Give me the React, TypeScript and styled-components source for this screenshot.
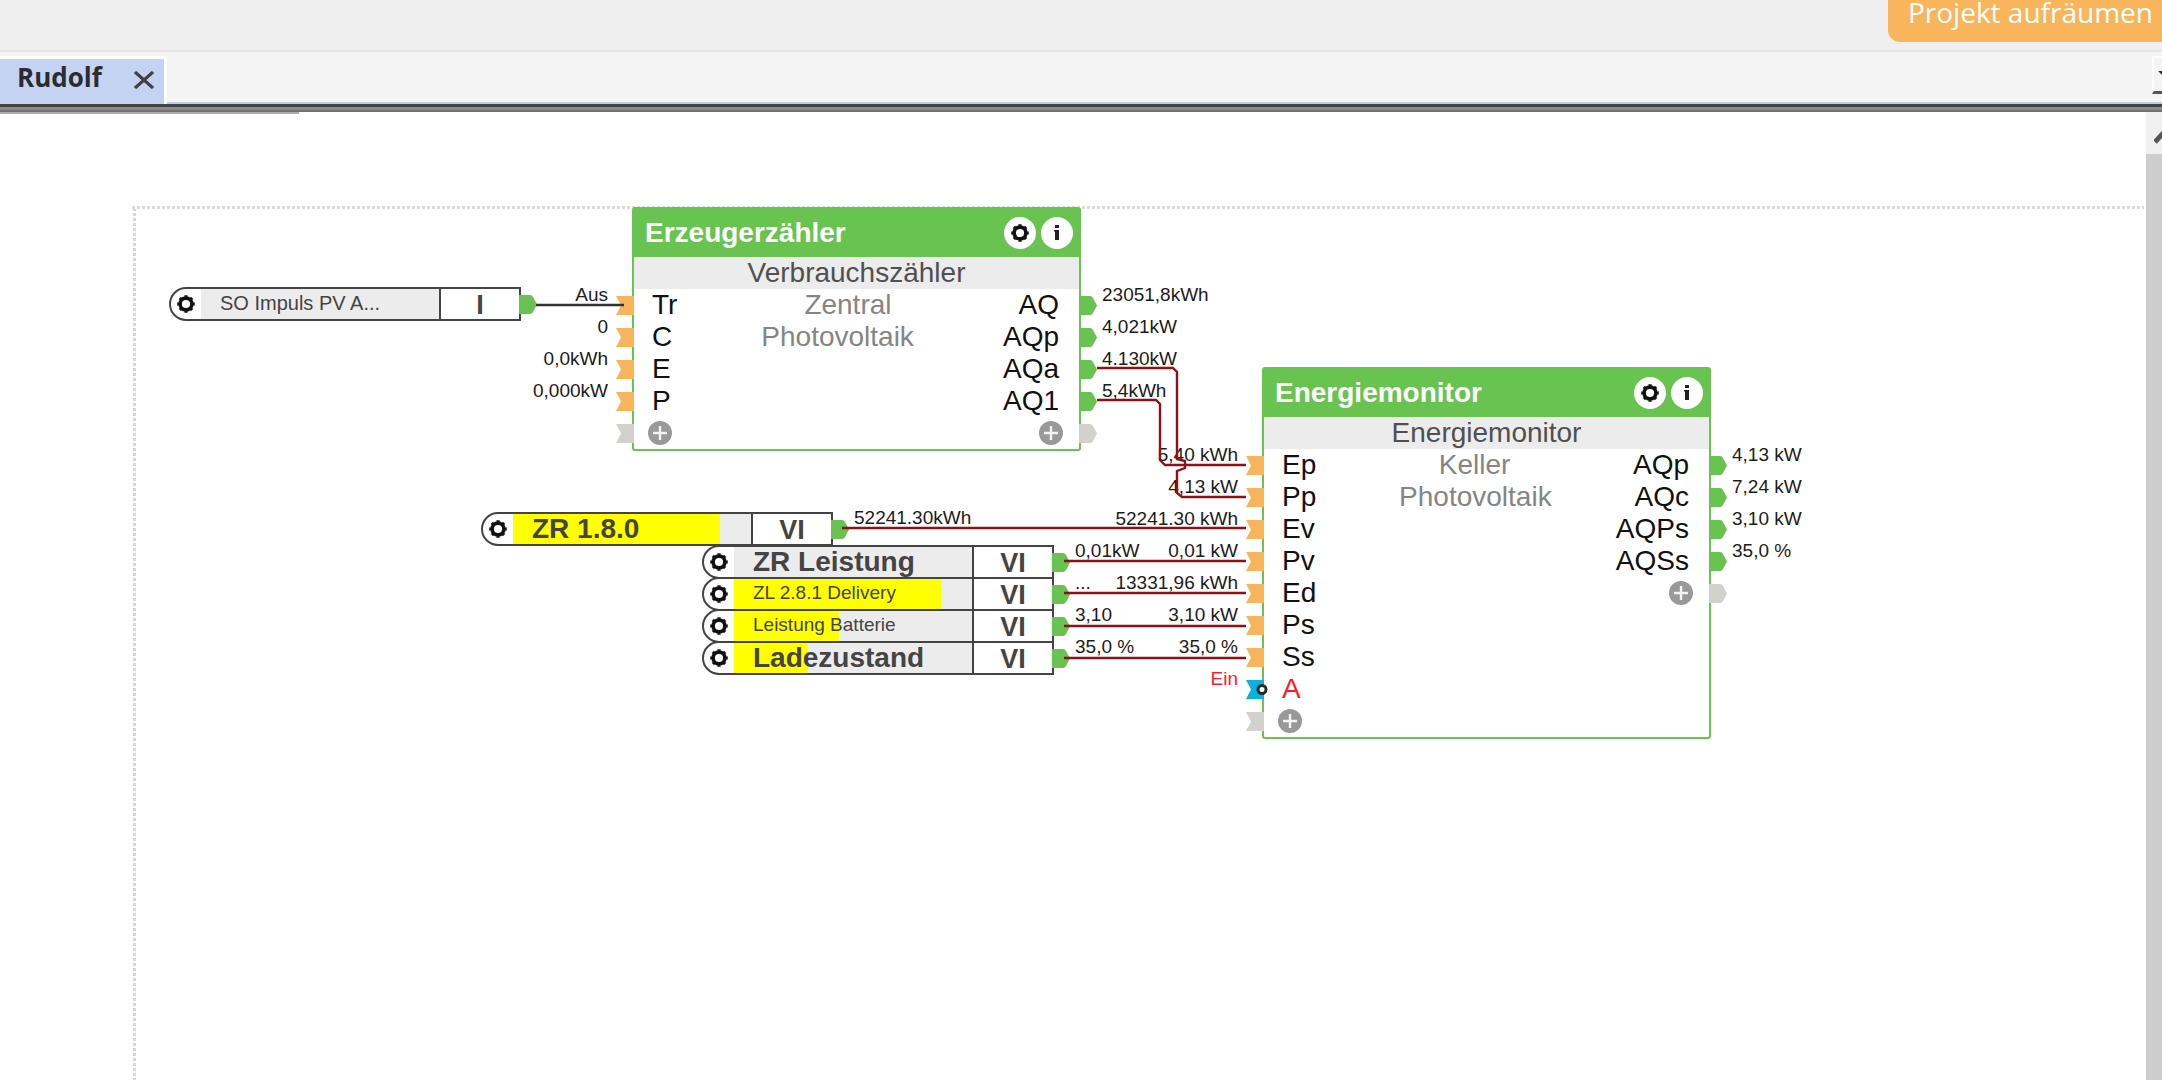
import React from 'react';
import styled, { createGlobalStyle, css } from 'styled-components';

const GREEN = '#69c350';
const ORANGE = '#f8b55b';
const CYAN = '#0cb2dc';
const MUTED = '#d2d1cb';
const WIRE = '#8c1217';
const INK = '#444444';

const GlobalStyle = createGlobalStyle`
  * { box-sizing: border-box; }
  body {
    margin: 0;
    background: #ffffff;
    font-family: "Liberation Sans", Arial, sans-serif;
    overflow: hidden;
  }
  button { font: inherit; }
`;

const Page = styled.div`
  display: flex;
  flex-direction: column;
  height: 100vh;
  overflow: hidden;
`;

/* ---------- top bars ---------- */

const Toolbar = styled.header`
  display: flex;
  justify-content: flex-end;
  align-items: flex-start;
  flex: none;
  height: 52px;
  border-bottom: 2px solid #e6e6e6;
  background: #efefef;
`;

const CleanupButton = styled.button`
  flex: none;
  height: 42px;
  padding: 0 9px 18px 20px;
  border: 0;
  border-radius: 0 0 0 12px;
  background: ${ORANGE};
  color: #ffffff;
  font-family: "Open Sans", "Noto Sans", sans-serif;
  font-size: 28px;
  line-height: 24px;
  white-space: nowrap;
`;

const TabBar = styled.nav`
  display: flex;
  align-items: stretch;
  justify-content: space-between;
  flex: none;
  height: 52px;
  padding-top: 4px;
  border-bottom: 2px solid #b9cbee;
  background: #f4f4f4;
`;

const Tab = styled.div`
  display: flex;
  align-items: center;
  gap: 32px;
  height: 48px;
  padding: 0 10px 10px 17px;
  border: solid #ffffff;
  border-width: 3px 3px 0 0;
  border-radius: 0 4px 0 0;
  background: #c5d3f2;
`;

const TabName = styled.a`
  color: #2b2b33;
  font-family: "Open Sans", "Noto Sans", sans-serif;
  font-size: 26px;
  font-weight: 700;
  line-height: 36px;
  text-decoration: none;
`;

const PlainButton = styled.button`
  display: flex;
  align-items: center;
  justify-content: center;
  flex: none;
  padding: 0;
  border: 0;
  background: none;

  svg { flex: none; }
`;

const TabClose = styled(PlainButton)`
  width: 20px;
  height: 20px;
  margin-top: 6px;
`;

const TabList = styled(PlainButton)`
  justify-content: flex-start;
  width: 10px;
  height: 38px;
  padding-left: 4px;
  border: solid #ffffff;
  border-width: 2px 0 0 2px;
  border-bottom: 3px solid #555555;
  overflow: hidden;
`;

const Rule = styled.div`
  flex: none;
  height: 8px;
  background: linear-gradient(#444444 0 3px, #8b8b8b 3px 6px, #727272 6px 8px);
`;

/* ---------- workspace ---------- */

const Workspace = styled.main`
  display: flex;
  flex: 1;
  min-height: 0;
`;

const Viewport = styled.div`
  display: flex;
  flex-direction: column;
  flex: 1;
  min-width: 0;
`;

const SheetEdge = styled.div`
  flex: none;
  width: 299px;
  height: 2px;
  background: #ababab;
`;

const Sheet = styled.section`
  position: relative;
  flex: 1;
  margin: 92px 2px 0 132px;
  background:
    repeating-linear-gradient(90deg, #dcdcdc 0 3px, #ffffff 3px 5px) 0 0 / 100% 3px no-repeat,
    repeating-linear-gradient(180deg, #ffffff 0 2px, #d6d6d6 2px 5px) 1px 0 / 3px 100% no-repeat;
`;

const Scrollbar = styled.div`
  display: flex;
  flex-direction: column;
  flex: none;
  width: 16px;
  background: #f0f0f0;
  overflow: hidden;
`;

const ScrollUp = styled(PlainButton)`
  justify-content: flex-start;
  height: 42px;
  padding: 4px 0 0 8px;
`;

const ScrollThumb = styled.div`
  flex: 1;
  background: #cdcdcd;
`;

/* ---------- nodes on the sheet ---------- */

type Placed = { $x: number; $y: number };

const placed = css<Placed>`
  position: absolute;
  left: ${(p) => p.$x}px;
  top: ${(p) => p.$y}px;
`;

const Block = styled.article<Placed>`
  ${placed}
  width: 449px;
  border: 2px solid ${GREEN};
  border-radius: 3px;
  background: #ffffff;
`;

const BlockHead = styled.header`
  display: flex;
  align-items: center;
  gap: 5px;
  height: 48px;
  padding: 0 6px 0 11px;
  background: ${GREEN};
`;

const BlockTitle = styled.h2`
  flex: 1;
  margin: 0;
  color: #ffffff;
  font-size: 28px;
  font-weight: 700;
  line-height: 48px;
`;

const RoundButton = styled(PlainButton)`
  width: 32px;
  height: 32px;
  border-radius: 50%;
  background: #ffffff;
`;

const BlockKind = styled.p`
  margin: 0;
  background: #ececec;
  color: #505050;
  font-size: 28px;
  line-height: 32px;
  text-align: center;
`;

const Row = styled.div`
  position: relative;
  display: flex;
  align-items: center;
  height: 32px;
  padding: 0 20px 0 18px;
  font-size: 28px;
  line-height: 32px;
`;

const PortName = styled.span<{ $alert?: boolean }>`
  color: ${(p) => (p.$alert ? '#ff1a2e' : '#111111')};
`;

const Detail = styled.span`
  flex: 1;
  color: #858585;
  text-align: center;
`;

const AddButton = styled(PlainButton)`
  width: 24px;
  height: 24px;
  margin: 0 -4px;
`;

const Pin = styled.svg<{ $side: 'in' | 'out' }>`
  position: absolute;
  top: 50%;
  width: 18px;
  height: 20px;
  margin-top: -10px;
  overflow: visible;
  ${(p) => (p.$side === 'in' ? 'left: -18px;' : 'left: 100%;')}
`;

const Value = styled.span<{ $side: 'in' | 'out'; $alert?: boolean }>`
  position: absolute;
  top: -4px;
  color: ${(p) => (p.$alert ? '#ff1a2e' : '#1c1c1c')};
  font-size: 19px;
  line-height: 20px;
  white-space: nowrap;
  ${(p) => (p.$side === 'in' ? 'right: calc(100% + 26px);' : 'left: calc(100% + 23px);')}
`;

const Tag = styled.div<Placed>`
  ${placed}
  display: flex;
  width: 352px;
  height: 34px;
  border: 2px solid ${INK};
  border-radius: 17px 0 0 17px;
  background: #ffffff;

  ${Value} { top: -6px; }
`;

const TagGear = styled(PlainButton)`
  width: 30px;
`;

const TagName = styled.span<{ $fill: number; $size: number }>`
  flex: 1;
  padding-left: 19px;
  background: linear-gradient(90deg, #ffff00 ${(p) => p.$fill}%, #ececec ${(p) => p.$fill}%);
  color: ${INK};
  font-size: ${(p) => p.$size}px;
  font-weight: ${(p) => (p.$size > 20 ? 700 : 400)};
  line-height: ${(p) => (p.$size > 20 ? 30 : 28)}px;
  white-space: nowrap;
`;

const TagType = styled.span`
  width: 80px;
  border-left: 2px solid ${INK};
  color: ${INK};
  font-size: 27px;
  font-weight: 700;
  line-height: 32px;
  text-align: center;
`;

const Wires = styled.svg`
  position: absolute;
  inset: 0;
  width: 100%;
  height: 100%;
  overflow: visible;
  pointer-events: none;
`;

/* ---------- drawings ---------- */

const GearIcon = () => (
  <svg width="20" height="20" viewBox="0 0 20 20" fill="none" stroke="#111111" aria-hidden="true">
    <circle cx="10" cy="10" r="5.9" strokeWidth="3.6" />
    <circle cx="10" cy="10" r="7.9" strokeWidth="1.8" pathLength={16} strokeDasharray="1 1" strokeDashoffset="0.5" />
  </svg>
);

const InfoIcon = () => (
  <svg width="20" height="20" viewBox="0 0 20 20" fill="#222222" aria-hidden="true">
    <rect x="8" y="2" width="4" height="3" />
    <path d="M7 7h5v10H8V8.500H7z" />
  </svg>
);

const PlusIcon = () => (
  <svg width="24" height="24" viewBox="0 0 24 24" aria-hidden="true">
    <circle cx="12" cy="12" r="12" fill="#999999" />
    <path d="M12 5v14M5 12h14" stroke="#f4f4f4" strokeWidth="2.4" />
  </svg>
);

const InPin = ({ color, ring }: { color: string; ring?: boolean }) => (
  <Pin $side="in" viewBox="0 0 18 20" aria-hidden="true">
    <path d="M0 1H18V20H0L5 10.5Z" fill={color} />
    {ring && <circle cx="16" cy="10.5" r="4" fill="#ffffff" stroke="#2b2b2b" strokeWidth="3" />}
  </Pin>
);

const OutPin = ({ color }: { color: string }) => (
  <Pin $side="out" viewBox="0 0 18 20" aria-hidden="true">
    <path d="M0 1H11Q13 1 14 3L18 10.5L14 18Q13 20 11 20H0Z" fill={color} />
  </Pin>
);

/* ---------- data ---------- */

type Port = { name: string; value: string; alert?: boolean };

type BlockData = {
  x: number;
  y: number;
  title: string;
  kind: string;
  details: string[];
  inputs: Port[];
  outputs: Port[];
};

const blocks: BlockData[] = [
  {
    x: 500,
    y: 1,
    title: 'Erzeugerzähler',
    kind: 'Verbrauchszähler',
    details: ['Zentral', 'Photovoltaik'],
    inputs: [
      { name: 'Tr', value: 'Aus' },
      { name: 'C', value: '0' },
      { name: 'E', value: '0,0kWh' },
      { name: 'P', value: '0,000kW' },
    ],
    outputs: [
      { name: 'AQ', value: '23051,8kWh' },
      { name: 'AQp', value: '4,021kW' },
      { name: 'AQa', value: '4.130kW' },
      { name: 'AQ1', value: '5,4kWh' },
    ],
  },
  {
    x: 1130,
    y: 161,
    title: 'Energiemonitor',
    kind: 'Energiemonitor',
    details: ['Keller', 'Photovoltaik'],
    inputs: [
      { name: 'Ep', value: '5,40 kWh' },
      { name: 'Pp', value: '4,13 kW' },
      { name: 'Ev', value: '52241.30 kWh' },
      { name: 'Pv', value: '0,01 kW' },
      { name: 'Ed', value: '13331,96 kWh' },
      { name: 'Ps', value: '3,10 kW' },
      { name: 'Ss', value: '35,0 %' },
      { name: 'A', value: 'Ein', alert: true },
    ],
    outputs: [
      { name: 'AQp', value: '4,13 kW' },
      { name: 'AQc', value: '7,24 kW' },
      { name: 'AQPs', value: '3,10 kW' },
      { name: 'AQSs', value: '35,0 %' },
    ],
  },
];

type TagData = {
  x: number;
  y: number;
  name: string;
  type: string;
  fill: number;
  size: number;
  value?: string;
};

const tags: TagData[] = [
  { x: 37, y: 81, name: 'SO Impuls PV A...', type: 'I', fill: 0, size: 20 },
  { x: 570, y: 339, name: 'ZR Leistung', type: 'VI', fill: 0, size: 28, value: '0,01kW' },
  { x: 570, y: 371, name: 'ZL 2.8.1 Delivery', type: 'VI', fill: 87, size: 19, value: '...' },
  { x: 570, y: 403, name: 'Leistung Batterie', type: 'VI', fill: 44, size: 19, value: '3,10' },
  { x: 570, y: 435, name: 'Ladezustand', type: 'VI', fill: 31, size: 28, value: '35,0 %' },
  { x: 349, y: 306, name: 'ZR 1.8.0', type: 'VI', fill: 87, size: 28, value: '52241.30kWh' },
];

const wires = [
  'M965 162H1041L1045 166V253L1053 255V262L1045 265V287L1050 291H1114',
  'M965 194H1024L1028 198V254L1033 259H1114',
  'M710 322H1114',
  'M932 355H1114',
  'M932 387H1114',
  'M932 420H1114',
  'M932 452H1114',
];

/* ---------- components ---------- */

function FunctionBlock({ data }: { data: BlockData }) {
  const { inputs, outputs, details } = data;
  const rowCount = Math.max(inputs.length, outputs.length) + 1;
  return (
    <Block $x={data.x} $y={data.y}>
      <BlockHead>
        <BlockTitle>{data.title}</BlockTitle>
        <RoundButton aria-label="Einstellungen"><GearIcon /></RoundButton>
        <RoundButton aria-label="Info"><InfoIcon /></RoundButton>
      </BlockHead>
      <BlockKind>{data.kind}</BlockKind>
      {Array.from({ length: rowCount }, (_, i) => {
        const input = inputs[i];
        const output = outputs[i];
        return (
          <Row key={i}>
            {input && (
              <>
                <Value $side="in" $alert={input.alert}>{input.value}</Value>
                <InPin color={input.alert ? CYAN : ORANGE} ring={input.alert} />
                <PortName $alert={input.alert}>{input.name}</PortName>
              </>
            )}
            {i === inputs.length && (
              <>
                <InPin color={MUTED} />
                <AddButton aria-label="Eingang hinzufügen"><PlusIcon /></AddButton>
              </>
            )}
            <Detail>{details[i]}</Detail>
            {output && (
              <>
                <PortName>{output.name}</PortName>
                <OutPin color={GREEN} />
                <Value $side="out">{output.value}</Value>
              </>
            )}
            {i === outputs.length && (
              <>
                <AddButton aria-label="Ausgang hinzufügen"><PlusIcon /></AddButton>
                <OutPin color={MUTED} />
              </>
            )}
          </Row>
        );
      })}
    </Block>
  );
}

function InputTag({ data }: { data: TagData }) {
  return (
    <Tag $x={data.x} $y={data.y}>
      <TagGear aria-label="Einstellungen"><GearIcon /></TagGear>
      <TagName $fill={data.fill} $size={data.size}>{data.name}</TagName>
      <TagType>{data.type}</TagType>
      <OutPin color={GREEN} />
      {data.value && <Value $side="out">{data.value}</Value>}
    </Tag>
  );
}

export default function App() {
  return (
    <>
      <GlobalStyle />
      <Page>
        <Toolbar>
          <CleanupButton>Projekt aufräumen</CleanupButton>
        </Toolbar>
        <TabBar>
          <Tab>
            <TabName href="#rudolf">Rudolf</TabName>
            <TabClose aria-label="Schließen">
              <svg width="20" height="18" viewBox="0 0 20 18" aria-hidden="true">
                <path d="M1 1L19 17M19 1L1 17" stroke="#404040" strokeWidth="3.2" />
              </svg>
            </TabClose>
          </Tab>
          <TabList aria-label="Alle Seiten">
            <svg width="16" height="8" viewBox="0 0 16 8" aria-hidden="true">
              <path d="M0 0H16L8 8Z" fill="#333333" />
            </svg>
          </TabList>
        </TabBar>
        <Rule />
        <Workspace>
          <Viewport>
            <SheetEdge />
            <Sheet>
              {tags.map((tag) => <InputTag key={tag.name} data={tag} />)}
              {blocks.map((block) => <FunctionBlock key={block.title} data={block} />)}
              <Wires fill="none" strokeWidth="2.4" aria-hidden="true">
                <path d="M404 99H492" stroke="#333333" />
                {wires.map((d) => <path key={d} d={d} stroke={WIRE} />)}
              </Wires>
            </Sheet>
          </Viewport>
          <Scrollbar>
            <ScrollUp aria-label="Nach oben">
              <svg width="24" height="18" viewBox="0 0 24 18" aria-hidden="true">
                <path d="M1 16L12 4L23 16" fill="none" stroke="#555555" strokeWidth="5" />
              </svg>
            </ScrollUp>
            <ScrollThumb />
          </Scrollbar>
        </Workspace>
      </Page>
    </>
  );
}
